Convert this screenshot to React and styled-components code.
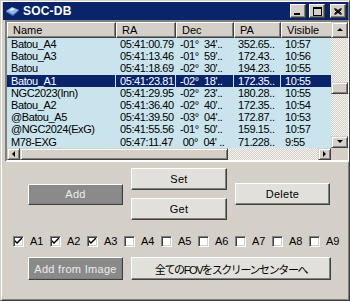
import React from "react";
import styled, { createGlobalStyle } from "styled-components";

const Global = createGlobalStyle`
  html, body { margin: 0; padding: 0; background: #d4d0c8; }
  body { font-family: "Liberation Sans", "Noto Sans CJK JP", sans-serif; font-size: 11px; }
`;

const Window = styled.div`
  width: 350px;
  height: 301px;
  box-sizing: border-box;
  background: #d4d0c8;
  border: 1px solid;
  border-color: #d4d0c8 #404040 #404040 #d4d0c8;
  box-shadow: inset 1px 1px #fff, inset -1px -1px #808080;
  padding: 1px 0 0 2px;
  display: flex;
  flex-direction: column;
  overflow: hidden;
`;

const TitleBar = styled.div`
  height: 18px;
  margin-right: 1px;
  background: #0a246a;
  display: flex;
  align-items: center;
  padding: 0 2px 0 2px;
  gap: 3px;
  flex-shrink: 0;
`;

const Title = styled.span`
  color: #fff;
  font-weight: bold;
  font-size: 12px;
  flex: 1;
  letter-spacing: 0.2px;
`;

const CaptionButton = styled.div`
  width: 16px;
  height: 14px;
  box-sizing: border-box;
  background: #d4d0c8;
  border: 1px solid;
  border-color: #fff #404040 #404040 #fff;
  box-shadow: inset -1px -1px #808080;
  display: flex;
  align-items: center;
  justify-content: center;
  margin-left: ${(p) => (p.$gap ? "2px" : "0")};
`;

const ListFrame = styled.div`
  margin: 0 0 0 2px;
  height: 142px;
  box-sizing: border-box;
  border-style: solid;
  border-width: 2px 1px 2px 2px;
  border-color: #808080 #fff #fff #808080;
  display: grid;
  grid-template-columns: 1fr 17px;
  grid-template-rows: 1fr 12px;
  background: #c9e4ec;
  flex-shrink: 0;
`;

const TableArea = styled.div`
  overflow: hidden;
`;

const Grid = styled.div`
  display: grid;
  grid-template-columns: 109px 60px 58px 47px 60px;
  width: 334px;
`;

const HeaderCell = styled.div`
  height: 16px;
  box-sizing: border-box;
  background: #d4d0c8;
  border: 1px solid;
  border-color: #fff #404040 #404040 #fff;
  box-shadow: inset -1px -1px #808080;
  padding-left: 5px;
  line-height: 14px;
  color: #000;
  white-space: nowrap;
  overflow: hidden;
`;

const Cell = styled.div`
  height: 12.2px;
  line-height: 12.2px;
  padding-left: 4px;
  white-space: pre;
  overflow: hidden;
  color: ${(p) => (p.$sel ? "#fff" : "#000")};
  background: ${(p) => (p.$sel ? "#0a246a" : "transparent")};
  border-right: 1px solid ${(p) => (p.$sel ? "#c9e4ec" : "transparent")};
  letter-spacing: -0.4px;
`;

const dither = `
  background-color: #d4d0c8;
  background-image: repeating-conic-gradient(#f4f3f0 0 25%, #d4d0c8 0 50%);
  background-size: 2px 2px;
`;

const VScroll = styled.div`
  ${dither}
  display: flex;
  flex-direction: column;
`;

const HScroll = styled.div`
  ${dither}
  display: flex;
`;

const ScrollButton = styled.div`
  box-sizing: border-box;
  width: ${(p) => p.$w}px;
  height: ${(p) => p.$h}px;
  background: #d4d0c8;
  border: 1px solid;
  border-color: #d4d0c8 #404040 #404040 #d4d0c8;
  box-shadow: inset 1px 1px #fff, inset -1px -1px #808080;
  display: flex;
  align-items: center;
  justify-content: center;
  flex-shrink: 0;
  margin-top: ${(p) => p.$mt || 0}px;
`;

const Spacer = styled.div`
  flex: 1;
`;

const Corner = styled.div`
  background: #d4d0c8;
`;

const Controls = styled.div`
  display: flex;
  flex-direction: column;
  padding-top: 6px;
`;

const ButtonRow = styled.div`
  display: flex;
  align-items: center;
  gap: 8px;
  padding-left: 25px;
`;

const ButtonColumn = styled.div`
  display: flex;
  flex-direction: column;
  gap: 8px;
`;

const Button = styled.div`
  box-sizing: border-box;
  width: ${(p) => p.$w || 96}px;
  height: ${(p) => p.$h || 22}px;
  border: 1px solid;
  border-color: #fff #404040 #404040 #fff;
  box-shadow: inset -1px -1px #808080;
  background: ${(p) => (p.$dark ? "#8a8a8a" : "#e2e0da")};
  color: ${(p) => (p.$dark ? "#ececec" : "#000")};
  display: flex;
  align-items: center;
  justify-content: center;
  font-size: 11px;
  letter-spacing: ${(p) => p.$ls || "0.3px"};
  white-space: nowrap;
`;

const CheckRow = styled.div`
  display: flex;
  padding: 15px 0 0 10px;
  height: 12px;
`;

const CheckItem = styled.label`
  width: 37px;
  display: flex;
  align-items: center;
  gap: 6px;
  color: #000;
`;

const Box = styled.span`
  width: 11px;
  height: 11px;
  box-sizing: border-box;
  background: #fff;
  border: 1px solid;
  border-color: #808080 #fff #fff #808080;
  box-shadow: inset 1px 1px #404040, inset -1px -1px #d4d0c8;
  display: flex;
  align-items: center;
  justify-content: center;
`;

const BottomRow = styled(ButtonRow)`
  padding-top: 10px;
`;

const Arrow = ({ dir }) => {
  const pts = {
    up: "1,5 4,2 7,5",
    down: "1,2 4,5 7,2",
    left: "5,1 2,4 5,7",
    right: "2,1 5,4 2,7",
  }[dir];
  return (
    <svg width="8" height="8" viewBox="0 0 8 8">
      <polygon points={pts} fill="#000" />
    </svg>
  );
};

const rows = [
  ["Batou_A4", "05:41:00.79", "-01°  34'..", "352.65..", "10:57"],
  ["Batou_A3", "05:41:13.46", "-01°  59'..", "172.43..", "10:56"],
  ["Batou", "05:41:18.69", "-02°  30'..", "194.23..", "10:55"],
  ["Batou_A1", "05:41:23.81", "-02°  18'..", "172.35..", "10:55"],
  ["NGC2023(Inn)", "05:41:29.95", "-02°  23'..", "180.28..", "10:55"],
  ["Batou_A2", "05:41:36.40", "-02°  40'..", "172.35..", "10:54"],
  ["@Batou_A5", "05:41:39.50", "-03°  04'..", "172.87..", "10:53"],
  ["@NGC2024(ExG)", "05:41:55.56", "-01°  50'..", "159.15..", "10:57"],
  ["M78-EXG", "05:47:11.47", " 00°  04' ..", "71.228..", "9:55"],
];

const headers = ["Name", "RA", "Dec", "PA", "Visible"];
const checks = [true, true, true, false, false, false, false, false, false];

const TitleIcon = () => (
  <svg width="15" height="12" viewBox="0 0 15 12">
    <polygon points="1,6 7,2 14,5 8,10" fill="#8fb8f0" />
    <polygon points="1,6 8,10 8,11 1,7" fill="#4f7fcf" />
    <polygon points="8,10 14,5 14,6 8,11" fill="#3a66b8" />
    <polygon points="4,5 7,3 10,4 7,6" fill="#dfeeff" />
  </svg>
);

export default function App() {
  return (
    <>
      <Global />
      <Window>
        <TitleBar>
          <TitleIcon />
          <Title>SOC-DB</Title>
          <CaptionButton>
            <svg width="8" height="8" viewBox="0 0 8 8">
              <rect x="0" y="6" width="6" height="2" fill="#000" />
            </svg>
          </CaptionButton>
          <CaptionButton>
            <svg width="9" height="9" viewBox="0 0 9 9">
              <rect x="0.5" y="0.5" width="8" height="8" fill="none" stroke="#000" />
              <rect x="0" y="0" width="9" height="2" fill="#000" />
            </svg>
          </CaptionButton>
          <CaptionButton $gap>
            <svg width="8" height="7" viewBox="0 0 8 7">
              <path d="M0.5 0.5 L7.5 6.5 M1.5 0.5 L7.5 5.5 M0.5 1.5 L6.5 6.5 M7.5 0.5 L0.5 6.5 M6.5 0.5 L0.5 5.5 M7.5 1.5 L1.5 6.5" stroke="#000" strokeWidth="1" />
            </svg>
          </CaptionButton>
        </TitleBar>

        <ListFrame>
          <TableArea>
            <Grid>
              {headers.map((h) => (
                <HeaderCell key={h}>{h}</HeaderCell>
              ))}
              {rows.map((r, i) =>
                r.map((c, j) => (
                  <Cell key={i + "-" + j} $sel={i === 3}>
                    {c}
                  </Cell>
                ))
              )}
            </Grid>
          </TableArea>
          <VScroll>
            <ScrollButton $w={17} $h={16}>
              <Arrow dir="up" />
            </ScrollButton>
            <ScrollButton $w={17} $h={12} $mt={44} />
            <Spacer />
            <ScrollButton $w={17} $h={12}>
              <Arrow dir="down" />
            </ScrollButton>
          </VScroll>
          <HScroll>
            <ScrollButton $w={13} $h={12}>
              <Arrow dir="left" />
            </ScrollButton>
            <ScrollButton $w={208} $h={12} />
            <Spacer />
            <ScrollButton $w={13} $h={12}>
              <Arrow dir="right" />
            </ScrollButton>
          </HScroll>
          <Corner />
        </ListFrame>

        <Controls>
          <ButtonRow>
            <Button $dark $w={95} $h={21}>Add</Button>
            <ButtonColumn>
              <Button>Set</Button>
              <Button>Get</Button>
            </ButtonColumn>
            <Button $w={95}>Delete</Button>
          </ButtonRow>

          <CheckRow>
            {checks.map((on, i) => (
              <CheckItem key={i}>
                <Box>
                  {on && (
                    <svg width="7" height="7" viewBox="0 0 7 7">
                      <path d="M0 2 L0 4 L2 6 L7 1 L7 -1 L2 4 Z" fill="#000" />
                    </svg>
                  )}
                </Box>
                A{i + 1}
              </CheckItem>
            ))}
          </CheckRow>

          <BottomRow>
            <Button $dark $w={95} $h={23}>Add from Image</Button>
            <Button $w={200} $h={23} $ls="-1.4px">
              全てのFOVをスクリーンセンターへ
            </Button>
          </BottomRow>
        </Controls>
      </Window>
    </>
  );
}
